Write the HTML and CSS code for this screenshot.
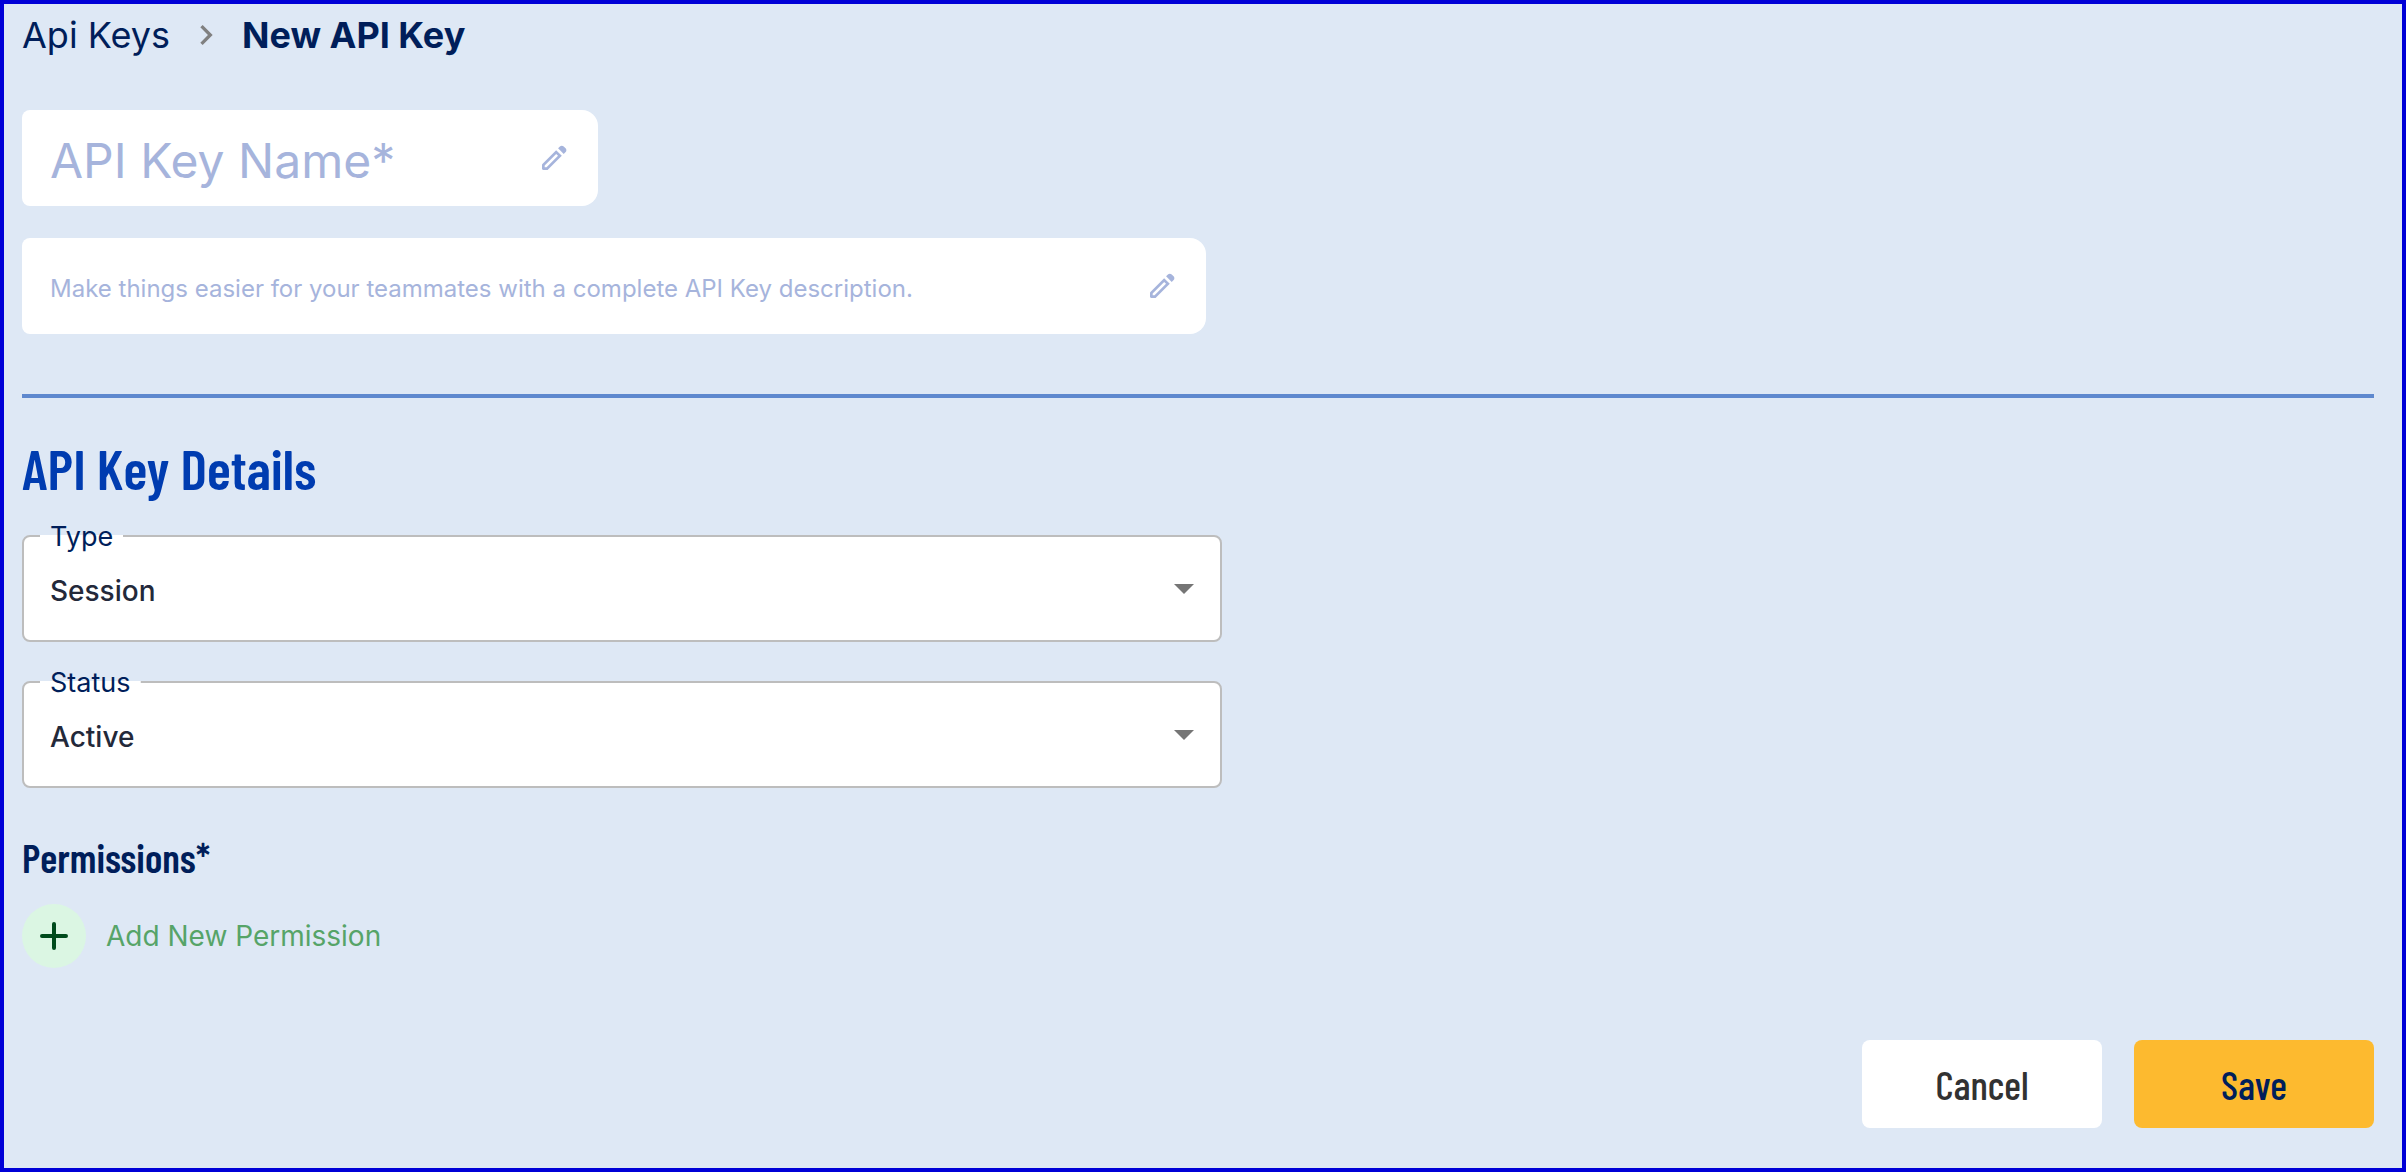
FILE: index.html
```html
<!DOCTYPE html>
<html lang="en">
<head>
    <meta charset="UTF-8">
    <meta name="viewport" content="width=device-width, initial-scale=1.0">
    <title>New API Key</title>
    <link rel="stylesheet" href="styles.css">
</head>
<body>
    <main class="page">
        <nav class="breadcrumb" aria-label="Breadcrumb">
            <a href="#">Api Keys</a>
            <svg class="chevron" viewBox="0 0 24 24" aria-hidden="true"><path d="M10 6 8.590 7.410 13.170 12l-4.580 4.590L10 18l6-6z"/></svg>
            <h1>New API Key</h1>
        </nav>

        <form class="key-form">
            <div class="field field-name">
                <input type="text" id="name" aria-label="API Key Name" placeholder="API Key Name*">
                <svg class="pencil" viewBox="0 0 24 24" aria-hidden="true"><path d="M5 19h1.400l8.625-8.625-1.400-1.400L5 17.600ZM19.300 8.925l-4.250-4.200 1.400-1.400q.575-.575 1.413-.575.837 0 1.412.575l1.400 1.400q.575.575.6 1.388.025.812-.55 1.387ZM4 21q-.425 0-.712-.288Q3 20.425 3 20v-2.825q0-.2.075-.387.075-.188.225-.338l10.300-10.300 4.250 4.250-10.300 10.300q-.15.150-.337.225-.188.075-.388.075Z"/></svg>
            </div>
            <div class="field field-description">
                <input type="text" id="description" aria-label="Description" placeholder="Make things easier for your teammates with a complete API Key description.">
                <svg class="pencil" viewBox="0 0 24 24" aria-hidden="true"><path d="M5 19h1.400l8.625-8.625-1.400-1.400L5 17.600ZM19.300 8.925l-4.250-4.200 1.400-1.400q.575-.575 1.413-.575.837 0 1.412.575l1.400 1.400q.575.575.6 1.388.025.812-.55 1.387ZM4 21q-.425 0-.712-.288Q3 20.425 3 20v-2.825q0-.2.075-.387.075-.188.225-.338l10.300-10.300 4.250 4.250-10.300 10.300q-.15.150-.337.225-.188.075-.388.075Z"/></svg>
            </div>

            <hr class="divider">

            <h2>API Key Details</h2>
            <div class="select-field">
                <label for="type">Type</label>
                <select id="type">
                    <option>Session</option>
                </select>
                <svg class="arrow" viewBox="0 0 24 24" aria-hidden="true"><path d="m7 10 5 5 5-5z"/></svg>
            </div>
            <div class="select-field">
                <label for="status">Status</label>
                <select id="status">
                    <option>Active</option>
                </select>
                <svg class="arrow" viewBox="0 0 24 24" aria-hidden="true"><path d="m7 10 5 5 5-5z"/></svg>
            </div>

            <h3>Permissions*</h3>
            <button type="button" class="add-permission">
                <span class="add-icon">
                    <svg viewBox="0 0 28 28" aria-hidden="true"><path d="M14 2v24M2 14h24"/></svg>
                </span>
                Add New Permission
            </button>

            <div class="actions">
                <button type="button" class="btn btn-cancel">Cancel</button>
                <button type="submit" class="btn btn-save">Save</button>
            </div>
        </form>
    </main>
</body>
</html>
```

FILE: styles.css
```css
* {
    box-sizing: border-box;
}
body {
    margin: 0;
    font-family: Inter, sans-serif;
    color: #001e5a;
    background: #dee8f5;
}
.page {
    min-height: 100vh;
    padding: 7px 28px 40px 18px;
    border: 4px solid #0000d7;
}
h1, h2, h3 {
    margin: 0;
}
h2, h3, .btn {
    font-family: "Barlow Condensed", "Roboto Condensed", "Liberation Sans Narrow", sans-serif;
}

/* breadcrumb */
.breadcrumb {
    display: flex;
    align-items: center;
    gap: 12px;
    height: 48px;
    font-size: 36px;
}
.breadcrumb a {
    color: inherit;
    text-decoration: none;
}
.breadcrumb h1 {
    font-size: 36px;
    font-weight: 700;
}
.chevron {
    width: 48px;
    height: 40px;
    fill: #808080;
}

/* name and description */
.field {
    display: flex;
    align-items: center;
    height: 96px;
    padding: 0 28px;
    border-radius: 8px 16px 16px 8px;
    background: #fff;
}
.field-name {
    max-width: 576px;
    margin-top: 51px;
}
.field-description {
    max-width: 1184px;
    margin-top: 32px;
}
.field input {
    flex: 1;
    min-width: 0;
    padding: 4px 0 0;
    border: none;
    outline: none;
    font-family: inherit;
    color: inherit;
    background: none;
}
.field input::placeholder {
    color: #a6b4dc;
    opacity: 1;
}
.field-name input {
    font-size: 48px;
}
.field-description input {
    font-size: 24px;
}
.pencil {
    width: 32px;
    height: 32px;
    fill: #a6b4dc;
}

.divider {
    height: 4px;
    margin: 60px 0 38px;
    border: none;
    background: #5e88ce;
}

/* details */
h2 {
    margin-bottom: 35px;
    font-size: 56px;
    font-weight: 600;
    line-height: 64px;
    color: #003cb0;
}
.select-field {
    position: relative;
    max-width: 1200px;
    margin-bottom: 39px;
}
.select-field label {
    position: absolute;
    top: -15px;
    left: 18px;
    padding: 2px 10px 0;
    font-size: 27px;
    line-height: 30px;
    background: linear-gradient(#fff, #fff) center / 100% 2px no-repeat;
}
.select-field select {
    display: block;
    width: 100%;
    height: 107px;
    padding: 4px 80px 0 26px;
    border: 2px solid #bdbdbd;
    border-radius: 8px;
    appearance: none;
    font-family: inherit;
    font-size: 28px;
    font-weight: 500;
    color: #23293a;
    background: #fff;
}
.arrow {
    position: absolute;
    top: 29px;
    right: 14px;
    width: 48px;
    height: 48px;
    fill: #757575;
    pointer-events: none;
}

/* permissions */
h3 {
    margin-top: 45px;
    font-size: 40px;
    font-weight: 600;
    line-height: 48px;
}
.add-permission {
    display: flex;
    align-items: center;
    gap: 20px;
    margin-top: 23px;
    padding: 0;
    border: none;
    font-family: inherit;
    font-size: 28px;
    color: #56a468;
    background: none;
    cursor: pointer;
}
.add-icon {
    display: flex;
    align-items: center;
    justify-content: center;
    width: 64px;
    height: 64px;
    border-radius: 50%;
    background: #dbf6e3;
}
.add-icon svg {
    width: 28px;
    height: 28px;
    fill: none;
    stroke: #004b1c;
    stroke-width: 4;
    stroke-linecap: round;
}

/* footer buttons */
.actions {
    display: flex;
    justify-content: flex-end;
    gap: 32px;
    margin-top: 72px;
}
.btn {
    width: 240px;
    height: 88px;
    border: none;
    border-radius: 8px;
    font-size: 40px;
    font-weight: 500;
    cursor: pointer;
}
.btn-cancel {
    color: #323232;
    background: #fff;
}
.btn-save {
    color: #001e5a;
    background: #fdba2f;
}
```
